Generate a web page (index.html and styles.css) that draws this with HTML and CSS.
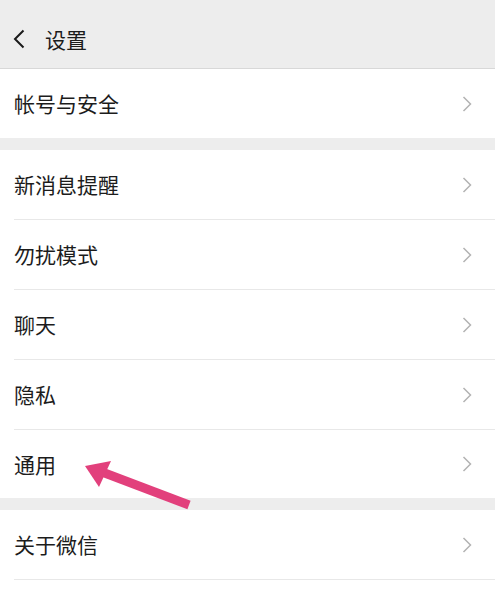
FILE: index.html
```html
<!DOCTYPE html>
<html lang="zh-CN">
<head>
<meta charset="utf-8">
<title>设置</title>
<link rel="stylesheet" href="styles.css">
</head>
<body>
<div class="page">
  <header class="header">
    <svg class="back" width="12" height="20" viewBox="0 0 12 20"><path d="M10.5 1.5 L2 10 L10.5 18.5" fill="none" stroke="#1a1a1a" stroke-width="2"/></svg>
    <span class="title">设置</span>
  </header>
  <section class="group">
    <div class="row"><span class="label">帐号与安全</span><svg class="chev" width="10" height="16" viewBox="0 0 10 16"><path d="M1.5 1 L8.5 8 L1.5 15" fill="none" stroke="#b3b3b3" stroke-width="1.5"/></svg></div>
  </section>
  <section class="group">
    <div class="row"><span class="label">新消息提醒</span><svg class="chev" width="10" height="16" viewBox="0 0 10 16"><path d="M1.5 1 L8.5 8 L1.5 15" fill="none" stroke="#b3b3b3" stroke-width="1.5"/></svg></div>
    <div class="row"><span class="label">勿扰模式</span><svg class="chev" width="10" height="16" viewBox="0 0 10 16"><path d="M1.5 1 L8.5 8 L1.5 15" fill="none" stroke="#b3b3b3" stroke-width="1.5"/></svg></div>
    <div class="row"><span class="label">聊天</span><svg class="chev" width="10" height="16" viewBox="0 0 10 16"><path d="M1.5 1 L8.5 8 L1.5 15" fill="none" stroke="#b3b3b3" stroke-width="1.5"/></svg></div>
    <div class="row"><span class="label">隐私</span><svg class="chev" width="10" height="16" viewBox="0 0 10 16"><path d="M1.5 1 L8.5 8 L1.5 15" fill="none" stroke="#b3b3b3" stroke-width="1.5"/></svg></div>
    <div class="row row-last"><span class="label">通用</span><svg class="chev" width="10" height="16" viewBox="0 0 10 16"><path d="M1.5 1 L8.5 8 L1.5 15" fill="none" stroke="#b3b3b3" stroke-width="1.5"/></svg></div>
  </section>
  <section class="group group-end">
    <div class="row row-bordered"><span class="label">关于微信</span><svg class="chev" width="10" height="16" viewBox="0 0 10 16"><path d="M1.5 1 L8.5 8 L1.5 15" fill="none" stroke="#b3b3b3" stroke-width="1.5"/></svg></div>
  </section>
  <svg class="arrow" width="495" height="590" viewBox="0 0 495 590">
    <line x1="189" y1="505" x2="102" y2="472" stroke="#e2407c" stroke-width="9"/>
    <polygon points="85,466 111,461 99,487" fill="#e2407c"/>
  </svg>
</div>
</body>
</html>
```
FILE: styles.css
```css
html, body {
  margin: 0;
  padding: 0;
  background: #ffffff;
}
.page {
  position: relative;
  width: 495px;
  height: 590px;
  overflow: hidden;
  background: #ededed;
  font-family: "Noto Sans CJK SC", "Noto Sans", sans-serif;
  color: #1c1c1c;
}
.header {
  box-sizing: border-box;
  height: 69px;
  padding: 10px 0 0 13px;
  display: flex;
  align-items: center;
  background: #ededed;
  border-bottom: 1px solid #d8d8d8;
}
.back {
  display: block;
}
.title {
  margin-left: 20px;
  font-size: 21px;
  line-height: 1;
}
.group {
  background: #ffffff;
  margin-bottom: 12px;
}
.group-end {
  margin-bottom: 0;
  height: 80px;
}
.row {
  box-sizing: border-box;
  height: 70px;
  margin-left: 14px;
  padding-right: 23px;
  display: flex;
  align-items: center;
  justify-content: space-between;
  border-bottom: 1px solid #e8e8e8;
}
.group:first-of-type .row {
  height: 69px;
  border-bottom: none;
}
.row-last {
  height: 68px;
  border-bottom: none;
}
.row-bordered {
  height: 70px;
}
.label {
  font-size: 21px;
  line-height: 1;
}
.chev {
  display: block;
}
.arrow {
  position: absolute;
  left: 0;
  top: 0;
  pointer-events: none;
}
```
